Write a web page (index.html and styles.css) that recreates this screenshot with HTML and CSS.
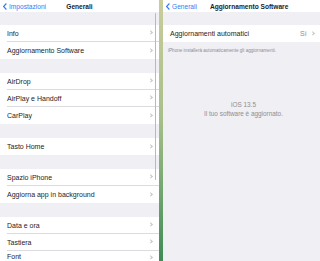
FILE: index.html
```html
<!DOCTYPE html>
<html lang="it">
<head>
  <meta charset="UTF-8" />
  <meta name="viewport" content="width=device-width, initial-scale=1.0" />
  <title>Generali - Aggiornamento Software</title>
  <link rel="stylesheet" href="styles.css">
</head>
<body>
  <div class="split">

    <!-- Master: Generali -->
    <section class="master">
      <header class="navbar">
        <a class="back">
          <svg width="4" height="7" viewBox="0 0 4 7"><polyline points="3.4,0.5 0.6,3.5 3.4,6.5" /></svg>
          Impostazioni
        </a>
        <span class="nav-title center">Generali</span>
      </header>

      <div class="gap first"></div>
      <ul class="group">
        <li>Info <i class="chev"></i></li>
        <li class="selected">Aggiornamento Software <i class="chev"></i></li>
      </ul>

      <div class="gap"></div>
      <ul class="group">
        <li>AirDrop <i class="chev"></i></li>
        <li>AirPlay e Handoff <i class="chev"></i></li>
        <li>CarPlay <i class="chev"></i></li>
      </ul>

      <div class="gap"></div>
      <ul class="group">
        <li>Tasto Home <i class="chev"></i></li>
      </ul>

      <div class="gap"></div>
      <ul class="group">
        <li>Spazio iPhone <i class="chev"></i></li>
        <li>Aggiorna app in background <i class="chev"></i></li>
      </ul>

      <div class="gap"></div>
      <ul class="group">
        <li>Data e ora <i class="chev"></i></li>
        <li>Tastiera <i class="chev"></i></li>
        <li class="last-visible">Font <i class="chev"></i></li>
      </ul>

      <div class="scrollbar"></div>
    </section>

    <div class="divider"></div>

    <!-- Detail: Aggiornamento Software -->
    <section class="detail">
      <header class="navbar">
        <a class="back">
          <svg width="4" height="7" viewBox="0 0 4 7"><polyline points="3.4,0.5 0.6,3.5 3.4,6.5" /></svg>
          Generali
        </a>
        <span class="nav-title">Aggiornamento Software</span>
      </header>

      <div class="gap first"></div>
      <ul class="group">
        <li>Aggiornamenti automatici <span class="value">Sì</span> <i class="chev"></i></li>
      </ul>
      <p class="footnote">iPhone installerà automaticamente gli aggiornamenti.</p>

      <div class="status">
        <p>iOS 13.5</p>
        <p>Il tuo software è aggiornato.</p>
      </div>
    </section>

  </div>
</body>
</html>
```

FILE: styles.css
```css
:root {
  --bg-gray: #efeff4;
  --blue: #2f7cf6;
  --sep: #dcdce0;
  --chev: #c4c4c8;
  --muted: #8e8e93;
}
body {
  margin: 0;
  width: 320px;
  height: 261px;
  overflow: hidden;
  font-family: "Liberation Sans", Arial, sans-serif;
  font-size: 7px;
  color: #1c1c1e;
  background: var(--bg-gray);
}
.split {
  display: flex;
  height: 261px;
}
/* Panels */
.master {
  position: relative;
  width: 159px;
  background: var(--bg-gray);
}
.detail {
  flex: 1;
  background: var(--bg-gray);
}
/* Wallpaper strip between the two panels */
.divider {
  width: 4px;
  background: linear-gradient(#c9cc9c, #a8bf8a 45%, #6fa36f 75%, #3f8a55);
}
/* Navbar */
.navbar {
  position: relative;
  display: flex;
  align-items: center;
  height: 12px;
  background: #fff;
  padding: 0 3px;
}
.back {
  display: flex;
  align-items: center;
  gap: 2px;
  color: var(--blue);
  font-size: 6.6px;
}
.back svg polyline {
  fill: none;
  stroke: var(--blue);
  stroke-width: 1.1;
}
.nav-title {
  font-weight: bold;
  font-size: 6.6px;
  margin-left: 13px;
}
.nav-title.center {
  position: absolute;
  left: 0;
  right: 0;
  margin: 0;
  text-align: center;
}
/* Grouped list */
.gap {
  height: 14px;
}
.gap.first {
  height: 13px;
}
.group {
  list-style: none;
  margin: 0;
  padding: 0 0 0 7px;
  background: #fff;
}
.group li {
  display: flex;
  align-items: center;
  height: 17px;
  padding-right: 7px;
  border-bottom: 1px solid var(--sep);
  box-sizing: border-box;
}
.group li:last-child {
  border-bottom: none;
}
/* the window cuts the last row; keep its label inside the frame */
.group li.last-visible {
  align-items: flex-start;
  padding-top: 2px;
}
.last-visible .chev {
  margin-top: 3px;
}
.chev {
  margin-left: auto;
  width: 2.4px;
  height: 2.4px;
  border-top: 0.8px solid var(--chev);
  border-right: 0.8px solid var(--chev);
  transform: rotate(45deg);
}
.value {
  margin-left: auto;
  margin-right: 4px;
  color: var(--muted);
}
.value + .chev {
  margin-left: 0;
}
.detail .group li {
  padding-right: 6px;
}
.footnote {
  margin: 6px 0 0 5px;
  font-size: 4.6px;
  color: var(--muted);
}
.status {
  margin-top: 47px;
  text-align: center;
  color: var(--muted);
  font-size: 6.4px;
  line-height: 9px;
  padding-left: 4px;
}
.status p {
  margin: 0;
}
/* Overlay scroll indicator */
.scrollbar {
  position: absolute;
  top: 13px;
  right: 3px;
  width: 1.5px;
  height: 167px;
  border-radius: 1px;
  background: #b9b9bd;
}
```
